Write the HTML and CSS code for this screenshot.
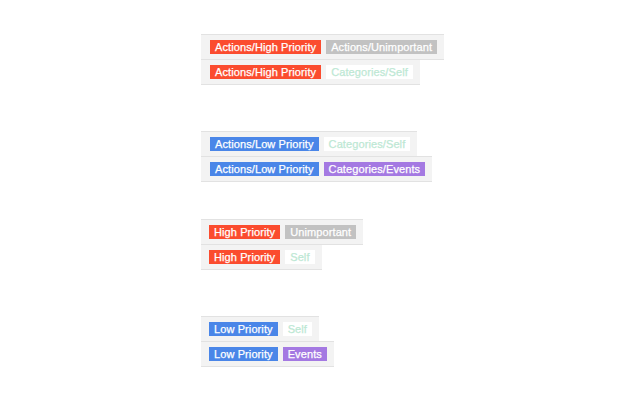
FILE: index.html
```html
<!DOCTYPE html>
<html>
<head>
<meta charset="utf-8">
<link rel="stylesheet" href="styles.css">
</head>
<body>
<div class="page">
  <div class="group g1">
    <div class="row"><span class="tag red">Actions/High Priority</span><span class="tag gray">Actions/Unimportant</span></div>
    <div class="row"><span class="tag red">Actions/High Priority</span><span class="tag white">Categories/Self</span></div>
  </div>
  <div class="group g2">
    <div class="row"><span class="tag blue">Actions/Low Priority</span><span class="tag white">Categories/Self</span></div>
    <div class="row"><span class="tag blue">Actions/Low Priority</span><span class="tag purple">Categories/Events</span></div>
  </div>
  <div class="group g3">
    <div class="row"><span class="tag red">High Priority</span><span class="tag gray">Unimportant</span></div>
    <div class="row"><span class="tag red">High Priority</span><span class="tag white">Self</span></div>
  </div>
  <div class="group g4">
    <div class="row"><span class="tag blue">Low Priority</span><span class="tag white">Self</span></div>
    <div class="row"><span class="tag blue">Low Priority</span><span class="tag purple">Events</span></div>
  </div>
</div>
</body>
</html>
```
FILE: styles.css
```css
html, body {
  margin: 0;
  padding: 0;
  background: #ffffff;
}
.page {
  padding-left: 201px;
  font-family: "Liberation Sans", Arial, sans-serif;
  font-size: 11px;
}
.group {
  display: flex;
  flex-direction: column;
  align-items: flex-start;
}
.g1 { padding-top: 34px; }
.g2 { margin-top: 46px; }
.g3 { margin-top: 37px; }
.g4 { margin-top: 46px; }
.row {
  display: flex;
  gap: 5px;
  padding: 5px 7px 5px 9px;
  background: #f3f3f3;
  border-top: 1px solid #e2e2e2;
  border-bottom: 1px solid #e2e2e2;
}
.row + .row {
  margin-top: -1px;
}
.g3 .row, .g4 .row {
  padding-left: 8px;
}
.tag {
  display: block;
  height: 14px;
  line-height: 14px;
  padding: 0 5px;
  color: #ffffff;
  white-space: nowrap;
  letter-spacing: 0.1px;
  -webkit-text-stroke: 0.25px currentColor;
}
.red { background: #fb4c2f; }
.gray { background: #c2c2c2; }
.blue { background: #4a86e8; }
.purple { background: #a479e2; }
.white { background: #ffffff; color: #bde8d4; }
```
